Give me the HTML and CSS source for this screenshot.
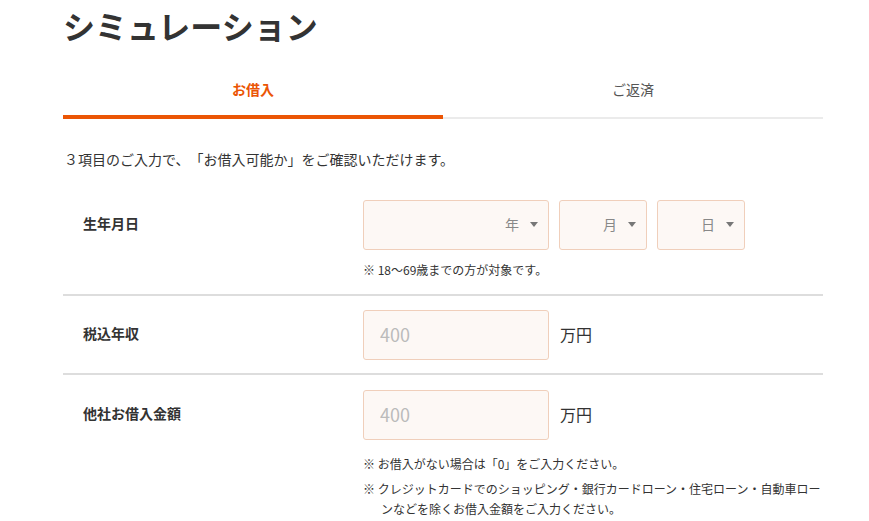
FILE: index.html
```html
<!DOCTYPE html>
<html lang="ja">
<head>
<meta charset="utf-8">
<title>シミュレーション</title>
<link rel="stylesheet" href="styles.css">
</head>
<body>
<div class="page">
  <h1 class="title">シミュレーション</h1>
  <div class="tabs">
    <div class="tab tab-active">お借入</div>
    <div class="tab">ご返済</div>
  </div>
  <p class="lead">３項目のご入力で、「お借入可能か」をご確認いただけます。</p>

  <div class="row">
    <div class="label">生年月日</div>
    <div class="control">
      <div class="selects">
        <div class="select select-year"><span class="select-text">年</span><span class="caret"></span></div>
        <div class="select select-small"><span class="select-text">月</span><span class="caret"></span></div>
        <div class="select select-small"><span class="select-text">日</span><span class="caret"></span></div>
      </div>
      <p class="note note-first">※ 18〜69歳までの方が対象です。</p>
    </div>
  </div>

  <div class="row row-mid">
    <div class="label">税込年収</div>
    <div class="control">
      <div class="input-line">
        <input class="field" type="text" placeholder="400">
        <span class="unit">万円</span>
      </div>
    </div>
  </div>

  <div class="row row-last">
    <div class="label">他社お借入金額</div>
    <div class="control">
      <div class="input-line">
        <input class="field" type="text" placeholder="400">
        <span class="unit">万円</span>
      </div>
      <p class="note note-gap">※ お借入がない場合は「0」をご入力ください。</p>
      <p class="note note-small-gap">※ クレジットカードでのショッピング・銀行カードローン・住宅ローン・自動車ローンなどを除くお借入金額をご入力ください。</p>
    </div>
  </div>
</div>
</body>
</html>
```

FILE: styles.css
```css
* {
  box-sizing: border-box;
}

html, body {
  margin: 0;
  padding: 0;
  background: #ffffff;
}

body {
  font-family: "Noto Sans CJK JP", "Noto Sans", sans-serif;
  color: #333333;
  text-spacing-trim: space-all;
}

.page {
  width: 760px;
  margin-left: 63px;
}

.title {
  margin: 1px 0 0 0;
  font-size: 32px;
  line-height: 48px;
  font-weight: 700;
  color: #333333;
}

.tabs {
  display: flex;
}

.tab {
  flex: 1;
  text-align: center;
  font-size: 14px;
  line-height: 20px;
  color: #555555;
  padding-top: 30px;
  padding-bottom: 18px;
  border-bottom: 2px solid #ebebeb;
}

.tab-active {
  color: #eb5505;
  font-weight: 700;
  padding-bottom: 16px;
  border-bottom: 4px solid #eb5505;
}

.lead {
  margin: 30px 0 17px 1px;
  font-size: 14px;
  line-height: 20px;
  color: #333333;
}

.row {
  display: grid;
  grid-template-columns: 300px 1fr;
  padding: 14px 0;
}

.row-mid {
  border-top: 2px solid #dddddd;
  border-bottom: 2px solid #dddddd;
  padding: 14px 0 13px;
}

.row-last {
  padding: 15px 0 0;
}

.label {
  padding-left: 20px;
  font-size: 14px;
  line-height: 46px;
  font-weight: 700;
  color: #333333;
}

.selects {
  display: flex;
  gap: 10px;
}

.select {
  height: 50px;
  border: 1px solid #f0cfbb;
  border-radius: 3px;
  background: #fdf8f5;
  display: flex;
  align-items: center;
  justify-content: flex-end;
  padding-right: 10px;
  padding-bottom: 2px;
}

.select-year {
  width: 186px;
}

.select-small {
  width: 88px;
}

.select-text {
  font-size: 14px;
  color: #888888;
  margin-right: 11px;
}

.caret {
  width: 0;
  height: 0;
  border-left: 4px solid transparent;
  border-right: 4px solid transparent;
  border-top: 5px solid #777777;
}

.input-line {
  display: flex;
  align-items: center;
}

.field {
  width: 186px;
  height: 50px;
  border: 1px solid #f0cfbb;
  border-radius: 3px;
  background: #fdf8f5;
  padding: 0 0 3px 16px;
  margin: 0;
  font-family: "Noto Sans CJK JP", "Noto Sans", sans-serif;
  font-size: 18px;
  color: #333333;
  outline: none;
}

.field::placeholder {
  color: #bbbbbb;
}

.unit {
  margin-left: 11px;
  font-size: 16px;
  color: #333333;
  padding-bottom: 3px;
}

.note {
  width: 466px;
  margin: 0;
  font-size: 12px;
  line-height: 20px;
  color: #333333;
  padding-left: 18px;
  text-indent: -18px;
}

.note-first {
  margin-top: 10px;
}

.note-gap {
  margin-top: 14px;
}

.note-small-gap {
  margin-top: 5px;
}
```
